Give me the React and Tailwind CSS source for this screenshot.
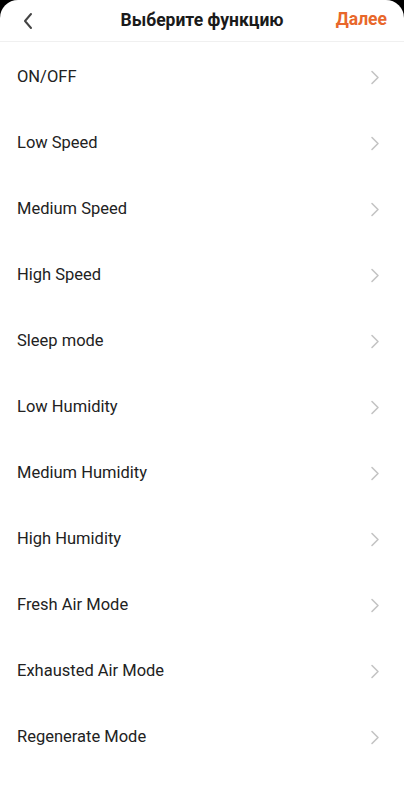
import React from "react";

const items = [
  "ON/OFF",
  "Low Speed",
  "Medium Speed",
  "High Speed",
  "Sleep mode",
  "Low Humidity",
  "Medium Humidity",
  "High Humidity",
  "Fresh Air Mode",
  "Exhausted Air Mode",
  "Regenerate Mode",
];

function Chevron() {
  return (
    <svg width="10" height="15" viewBox="0 0 10 15" fill="none">
      <path d="M2 1.5 L8 7.5 L2 13.5" stroke="#c4c4c4" strokeWidth="1.6" strokeLinecap="round" strokeLinejoin="round" />
    </svg>
  );
}

export default function App() {
  return (
    <div className="w-[404px] h-[800px] bg-black overflow-hidden" style={{ fontFamily: "Roboto, 'Noto Sans', sans-serif" }}>
      <div className="h-full bg-white rounded-t-[18px]">
        <div className="relative h-[42px] flex items-center justify-center border-b border-[#f0f0f0]">
          <div className="absolute left-[22px] top-[12px]">
            <svg width="12" height="18" viewBox="0 0 12 18" fill="none">
              <path d="M9 2 L3 9 L9 16" stroke="#444" strokeWidth="2" strokeLinecap="round" strokeLinejoin="round" />
            </svg>
          </div>
          <span className="text-[17.5px] font-bold text-[#1a1a1a] leading-none">Выберите функцию</span>
          <span className="absolute right-[17px] top-[11px] text-[17.5px] font-bold text-[#e8672b] leading-none">Далее</span>
        </div>
        <div className="flex flex-col pt-[2px]">
          {items.map((t) => (
            <div key={t} className="h-[66px] flex items-center justify-between pl-[17px] pr-[24px]">
              <span className="text-[16.5px] text-[#222]">{t}</span>
              <Chevron />
            </div>
          ))}
        </div>
      </div>
    </div>
  );
}
